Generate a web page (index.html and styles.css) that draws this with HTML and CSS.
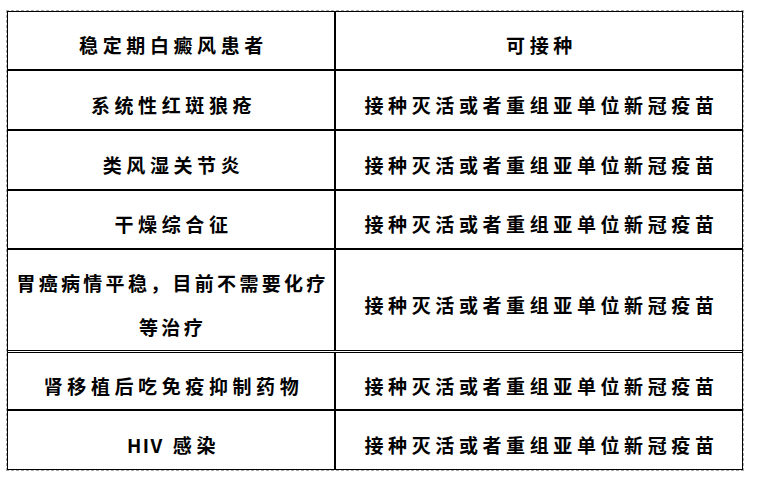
FILE: index.html
```html
<!DOCTYPE html>
<html lang="zh-CN">
<head>
<meta charset="utf-8">
<title>新冠疫苗接种人群</title>
<link rel="stylesheet" href="styles.css">
</head>
<body>
<div class="frame">
  <div class="table">
    <div class="row r1"><div class="cell">稳定期白癜风患者</div><div class="cell">可接种</div></div>
    <div class="row r2"><div class="cell">系统性红斑狼疮</div><div class="cell">接种灭活或者重组亚单位新冠疫苗</div></div>
    <div class="row r3"><div class="cell">类风湿关节炎</div><div class="cell">接种灭活或者重组亚单位新冠疫苗</div></div>
    <div class="row r4"><div class="cell">干燥综合征</div><div class="cell">接种灭活或者重组亚单位新冠疫苗</div></div>
    <div class="row r5"><div class="cell tight">胃癌病情平稳，目前不需要化疗等治疗</div><div class="cell">接种灭活或者重组亚单位新冠疫苗</div></div>
    <div class="row r6"><div class="cell">肾移植后吃免疫抑制药物</div><div class="cell">接种灭活或者重组亚单位新冠疫苗</div></div>
    <div class="row r7"><div class="cell"><span class="latin">HIV</span>&nbsp;感染</div><div class="cell">接种灭活或者重组亚单位新冠疫苗</div></div>
  </div>
</div>
</body>
</html>
```
FILE: styles.css
```css
html, body {
  margin: 0;
  padding: 0;
  background: #ffffff;
}

.frame {
  margin: 10px 0 0 6px;
  width: 738px;
  border: 1px dashed #a8a8a8;
  box-sizing: border-box;
}

.table {
  width: 736px;
  border: 1px solid #000;
  box-sizing: border-box;
  font-family: "Noto Sans CJK SC", "Noto Sans", sans-serif;
  font-weight: 700;
  font-size: 19px;
  color: #000;
}

.row {
  display: grid;
  grid-template-columns: 326px 408px;
  box-sizing: border-box;
  border-top: 2px solid #000;
}

.row.r1 { border-top: none; height: 57px; }
.row.r2 { height: 60px; }
.row.r3 { height: 60px; }
.row.r4 { height: 59px; }
.row.r5 { height: 102px; }
.row.r6 { height: 59px; border-top: 3px double #000; }
.row.r7 { height: 60px; }

.cell {
  display: flex;
  align-items: center;
  justify-content: center;
  text-align: center;
  box-sizing: border-box;
  padding: 9px 0 0 5px;
  letter-spacing: 4.6px;
  line-height: 44px;
}

.cell + .cell {
  border-left: 2px solid #000;
}

.cell.tight {
  padding: 9px 0 0 3px;
  letter-spacing: 3.3px;
}

.latin {
  letter-spacing: 1.5px;
}
```
